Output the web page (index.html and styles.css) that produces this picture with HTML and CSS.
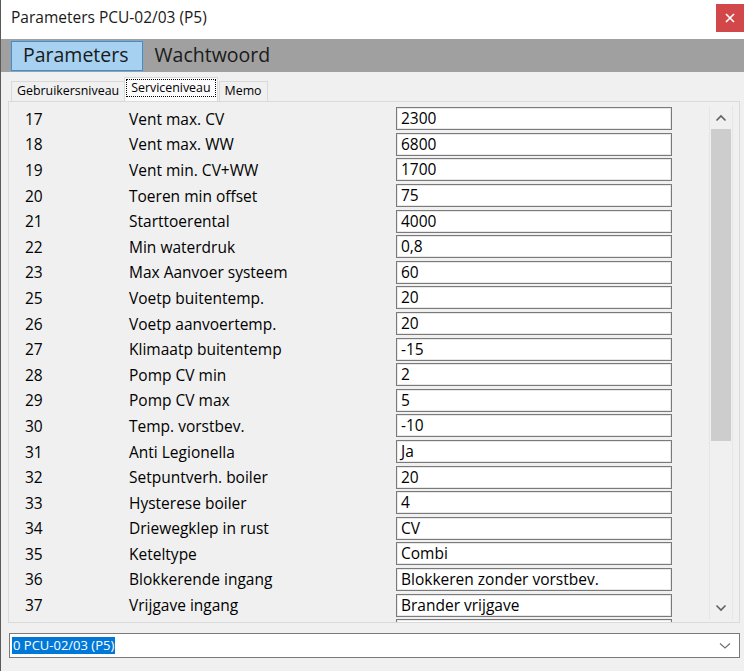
FILE: index.html
```html
<!DOCTYPE html>
<html lang="nl">
<head>
    <meta charset="UTF-8">
    <title>Parameters PCU-02/03 (P5)</title>
    <link rel="stylesheet" href="styles.css">
</head>
<body>
    <div class="titlebar">
        <span class="title">Parameters PCU-02/03 (P5)</span>
        <div class="close-btn">
            <svg width="10" height="10" viewBox="0 0 10 10"><path d="M1 1 L9 9 M9 1 L1 9" stroke="#fff" stroke-width="1.6"/></svg>
        </div>
    </div>

    <div class="menubar">
        <div class="menu-item active">Parameters</div>
        <div class="menu-item">Wachtwoord</div>
    </div>

    <div class="tabs">
        <div class="tab">Gebruikersniveau</div>
        <div class="tab selected"><span class="focus">Serviceniveau</span></div>
        <div class="tab">Memo</div>
    </div>

    <div class="panel">
        <div class="rows" id="rows"></div>
        <div class="scrollbar">
            <div class="arrow">
                <svg width="12" height="8" viewBox="0 0 12 8"><path d="M1.5 6.5 L6 2 L10.5 6.5" fill="none" stroke="#606060" stroke-width="1.6"/></svg>
            </div>
            <div class="track"><div class="thumb"></div></div>
            <div class="arrow">
                <svg width="12" height="8" viewBox="0 0 12 8"><path d="M1.5 1.5 L6 6 L10.5 1.5" fill="none" stroke="#606060" stroke-width="1.6"/></svg>
            </div>
        </div>
    </div>

    <div class="combo">
        <span class="combo-text">0 PCU-02/03 (P5)</span>
        <svg class="combo-arrow" width="12" height="8" viewBox="0 0 12 8"><path d="M1 1.5 L6 6 L11 1.5" fill="none" stroke="#707070" stroke-width="1.2"/></svg>
    </div>

    <script>
        // Parameter list: number, name, value
        const params = [
            [17, 'Vent max. CV', '2300'],
            [18, 'Vent max. WW', '6800'],
            [19, 'Vent min. CV+WW', '1700'],
            [20, 'Toeren min offset', '75'],
            [21, 'Starttoerental', '4000'],
            [22, 'Min waterdruk', '0,8'],
            [23, 'Max Aanvoer systeem', '60'],
            [25, 'Voetp buitentemp.', '20'],
            [26, 'Voetp aanvoertemp.', '20'],
            [27, 'Klimaatp buitentemp', '-15'],
            [28, 'Pomp CV min', '2'],
            [29, 'Pomp CV max', '5'],
            [30, 'Temp. vorstbev.', '-10'],
            [31, 'Anti Legionella', 'Ja'],
            [32, 'Setpuntverh. boiler', '20'],
            [33, 'Hysterese boiler', '4'],
            [34, 'Driewegklep in rust', 'CV'],
            [35, 'Keteltype', 'Combi'],
            [36, 'Blokkerende ingang', 'Blokkeren zonder vorstbev.'],
            [37, 'Vrijgave ingang', 'Brander vrijgave'],
            ['', '', '']
        ];

        const rows = document.getElementById('rows');
        params.forEach(p => {
            const row = document.createElement('div');
            row.className = 'row';
            row.innerHTML = `<span class="num">${p[0]}</span><span class="label">${p[1]}</span><span class="value">${p[2]}</span>`;
            rows.appendChild(row);
        });
    </script>
</body>
</html>
```

FILE: styles.css
```css
body {
    margin: 0;
    width: 744px;
    height: 671px;
    overflow: hidden;
    background-color: #f0f0f0;
    font-family: "Open Sans", "Noto Sans", sans-serif;
    color: #000;
    border-left: 1px solid #5a5a5a;
    box-sizing: border-box;
}

.titlebar {
    height: 39px;
    background-color: #fff;
    display: flex;
    align-items: flex-start;
    justify-content: space-between;
}

.title {
    font-size: 15.5px;
    padding: 6px 0 0 10px;
    color: #1a1a1a;
}

.close-btn {
    width: 28px;
    height: 28px;
    margin-top: 4px;
    background-color: #d2484a;
    display: flex;
    align-items: center;
    justify-content: center;
}

.menubar {
    height: 33px;
    background-color: #a0a0a0;
    display: flex;
    align-items: flex-start;
    padding: 2px 0 0 10px;
    box-sizing: border-box;
}

.menu-item {
    font-size: 19.5px;
    line-height: 26px;
    height: 28px;
    padding: 0 13px 0 11px;
    border: 1px solid transparent;
    color: #1a1a1a;
}

.menu-item.active {
    background-color: #a6d1f1;
    border-color: #3d8ed2;
}

.tabs {
    display: flex;
    align-items: flex-end;
    height: 29px;
    padding-left: 10px;
    box-sizing: border-box;
}

.tab {
    font-size: 12.4px;
    height: 19px;
    line-height: 18px;
    padding: 0 5px;
    border: 1px solid #d9d9d9;
    border-bottom: none;
    background-color: #f0f0f0;
    margin-right: -1px;
}

.tab.selected {
    height: 22px;
    background-color: #fbfbfb;
    padding: 1px 1px 0 1px;
    margin: 0 1px 0 0;
    position: relative;
    z-index: 1;
}

.tab .focus {
    display: block;
    border: 1px dotted #000;
    line-height: 16px;
    padding: 0 4px;
}

.panel {
    margin: 0 4px 0 7px;
    height: 522px;
    border: 1px solid #dadada;
    display: flex;
    box-sizing: border-box;
    background-color: #f0f0f0;
}

.rows {
    flex: 1;
    overflow: hidden;
    padding-top: 4px;
}

.row {
    display: flex;
    align-items: center;
    height: 25.6px;
    font-size: 15.5px;
}

.num {
    width: 104px;
    padding-left: 16px;
}

.label {
    width: 267px;
}

.value {
    width: 270px;
    height: 21px;
    line-height: 21px;
    padding-left: 4px;
    background-color: #fff;
    border: 1px solid #7a7a7a;
    box-shadow: inset 0 0 0 1px #e8e8e8;
}

.scrollbar {
    width: 22px;
    margin: 4px 6px 3px 0;
    display: flex;
    flex-direction: column;
    background-color: #f0f0f0;
    border-left: 1px solid #e6e6e6;
    border-right: 1px solid #e6e6e6;
}

.arrow {
    height: 23px;
    display: flex;
    align-items: center;
    justify-content: center;
}

.track {
    flex: 1;
}

.thumb {
    height: 312px;
    margin: 0 1px;
    background-color: #cdcdcd;
}

.combo {
    margin: 10px 4px 0 8px;
    height: 25px;
    background-color: #fff;
    border: 1px solid #7a7a7a;
    box-sizing: border-box;
    display: flex;
    align-items: center;
    justify-content: space-between;
    padding: 0 8px 0 2px;
}

.combo-text {
    font-size: 13px;
    line-height: 17px;
    background-color: #0078d7;
    color: #fff;
    padding: 0 1px;
}
```
